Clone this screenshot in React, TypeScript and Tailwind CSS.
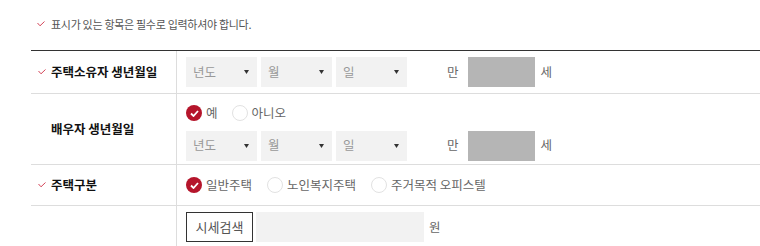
import React from "react";

const font = { fontFamily: '"Noto Sans CJK KR", "Noto Sans", sans-serif' };

function Tick({ className = "" }: { className?: string }) {
  return (
    <svg width="8" height="6" viewBox="0 0 8 6" className={className}>
      <polyline points="0.5,2 3,4.8 7.5,0.5" fill="none" stroke="#d4475a" strokeWidth="1" />
    </svg>
  );
}

function Select({ label }: { label: string }) {
  return (
    <div className="w-[71px] h-[30px] bg-[#f2f2f2] flex items-center justify-between pl-[7px] pr-[8px]">
      <span className="text-[12.5px] text-[#999]">{label}</span>
      <svg width="5" height="4" viewBox="0 0 5 4">
        <polygon points="0,0 5,0 2.5,4" fill="#333" />
      </svg>
    </div>
  );
}

function Radio({ label, checked }: { label: string; checked?: boolean }) {
  return (
    <label className="flex items-center gap-[4px] text-[12.5px] text-[#666]">
      {checked ? (
        <span className="w-[16px] h-[16px] rounded-full bg-[#b5152b] flex items-center justify-center">
          <svg width="9" height="7" viewBox="0 0 9 7">
            <polyline points="1,3.5 3.5,6 8,1" fill="none" stroke="#fff" strokeWidth="1.8" />
          </svg>
        </span>
      ) : (
        <span className="w-[16px] h-[16px] rounded-full border border-[#e2e2e2] bg-white" />
      )}
      <span>{label}</span>
    </label>
  );
}

function DateRow() {
  return (
    <div className="flex items-center">
      <div className="flex gap-[4px]">
        <Select label="년도" />
        <Select label="월" />
        <Select label="일" />
      </div>
      <span className="ml-[40px] text-[12.5px] text-[#666]">만</span>
      <div className="ml-[9px] w-[67px] h-[30px] bg-[#b5b5b5]" />
      <span className="ml-[6px] text-[12.5px] text-[#666]">세</span>
    </div>
  );
}

function Row({
  label,
  required,
  className = "",
  children,
}: {
  label?: string;
  required?: boolean;
  className?: string;
  children: React.ReactNode;
}) {
  return (
    <div className={`flex border-b border-[#ddd] ${className}`}>
      <div className="w-[146px] shrink-0 border-r border-[#ddd] flex items-center pl-[7px]">
        <span className="w-[13px]">{required && <Tick />}</span>
        {label && <span className="text-[12.5px] font-bold text-[#111]">{label}</span>}
      </div>
      <div className="flex-1 pl-[9px]">{children}</div>
    </div>
  );
}

export default function App() {
  return (
    <div className="w-[760px] h-[246px] bg-white overflow-hidden" style={font}>
      <div className="flex items-center pl-[37px] pt-[14px] h-[34px]">
        <Tick className="mr-[6px]" />
        <span className="text-[11px] text-[#555] tracking-[-0.3px]">표시가 있는 항목은 필수로 입력하셔야 합니다.</span>
      </div>
      <div className="ml-[31px] mt-[16px] border-t border-[#333]">
        <Row label="주택소유자 생년월일" required className="h-[43px]">
          <div className="h-full flex items-center">
            <DateRow />
          </div>
        </Row>
        <Row label="배우자 생년월일" className="h-[71px]">
          <div className="pt-[10px] flex flex-col gap-[8px]">
            <div className="flex gap-[14px]">
              <Radio label="예" checked />
              <Radio label="아니오" />
            </div>
            <DateRow />
          </div>
        </Row>
        <Row label="주택구분" required className="h-[41px]">
          <div className="h-full flex items-center gap-[15px]">
            <Radio label="일반주택" checked />
            <Radio label="노인복지주택" />
            <Radio label="주거목적 오피스텔" />
          </div>
        </Row>
        <Row className="h-[41px] border-b-0">
          <div className="pt-[6px] flex items-center">
            <button className="w-[67px] h-[30px] border border-[#333] bg-white text-[13px] text-[#555]">시세검색</button>
            <div className="ml-[3px] w-[168px] h-[30px] bg-[#f2f2f2]" />
            <span className="ml-[5px] text-[12.5px] text-[#666]">원</span>
          </div>
        </Row>
      </div>
    </div>
  );
}
